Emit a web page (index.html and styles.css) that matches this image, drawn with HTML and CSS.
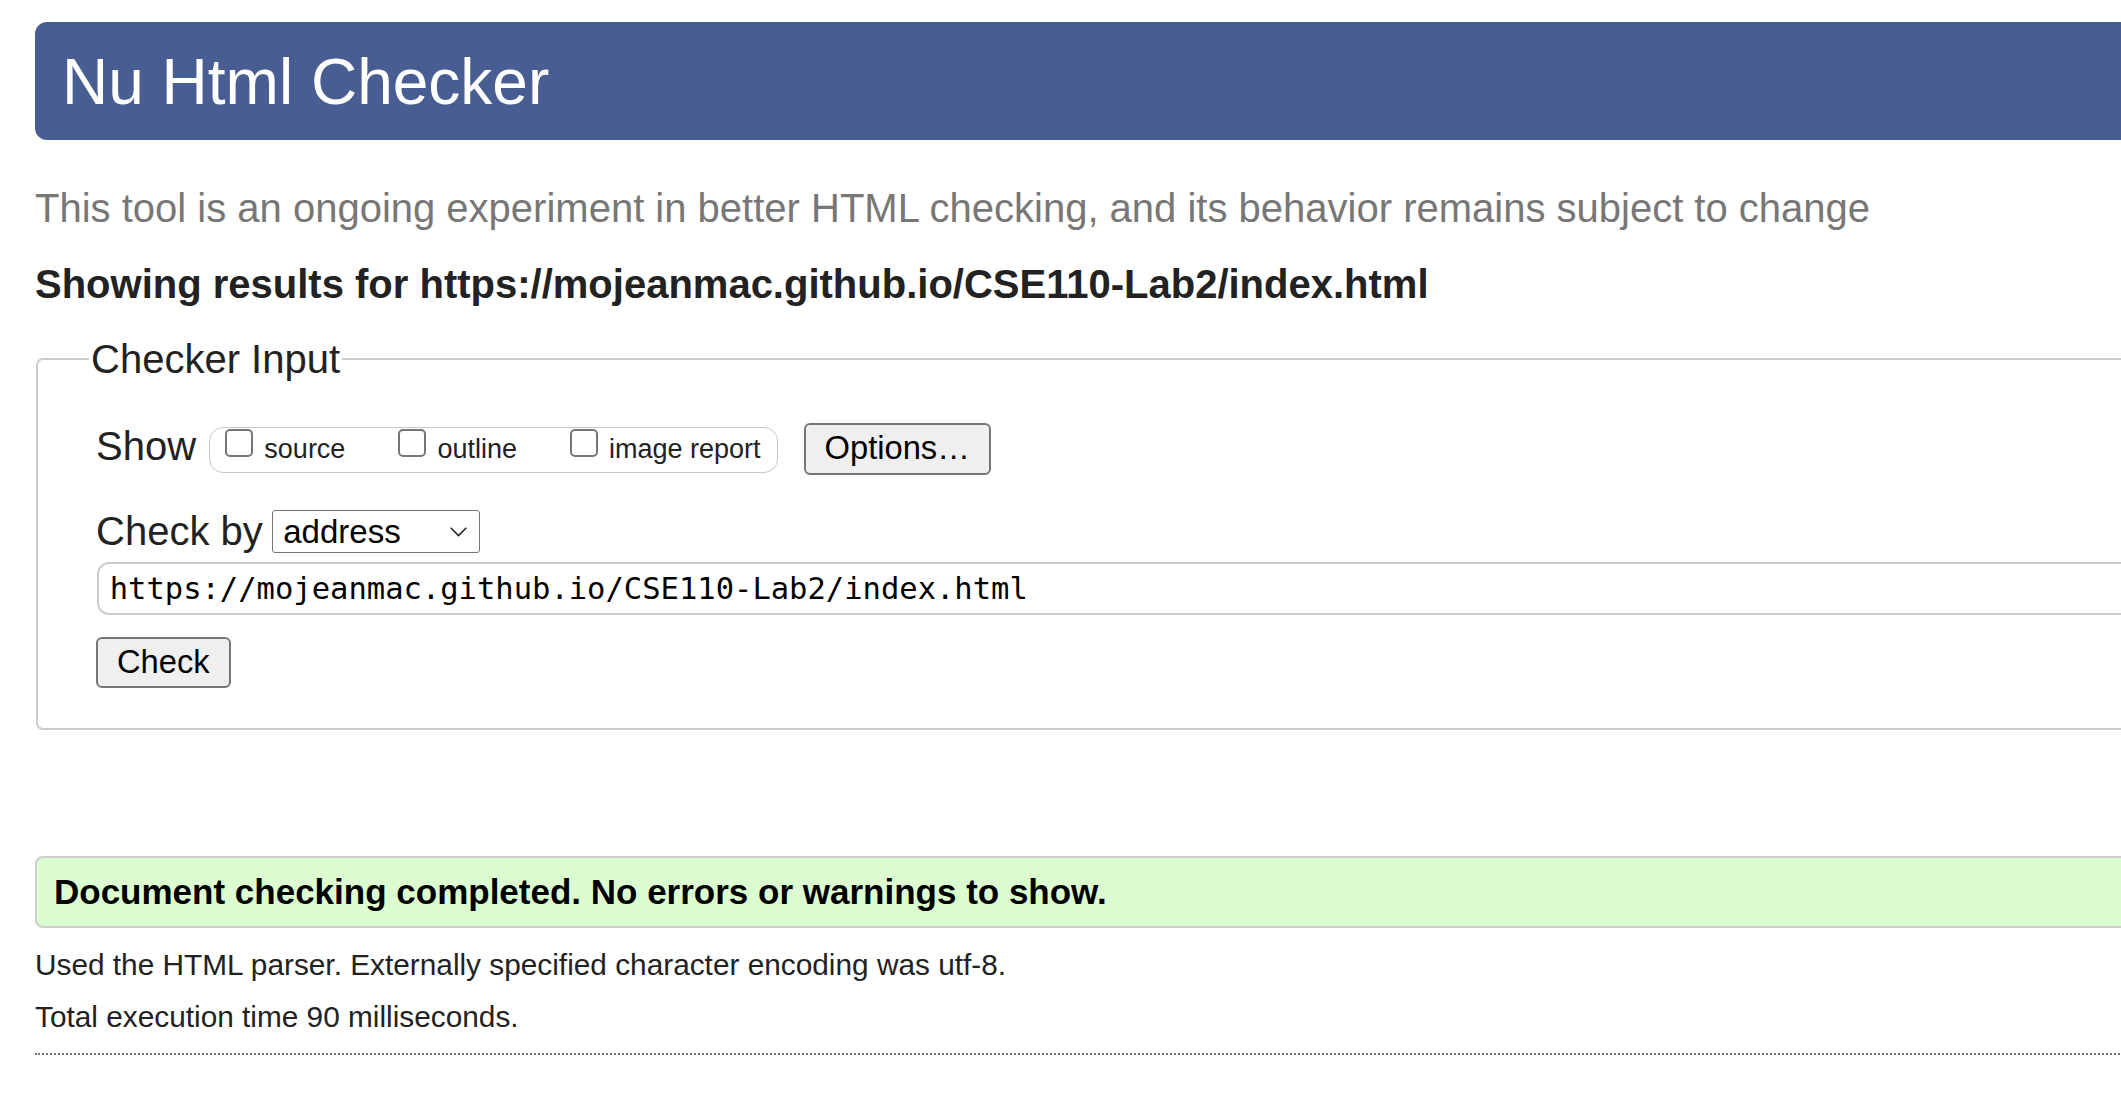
FILE: index.html
```html
<!DOCTYPE html>
<html lang="en">
<head>
<meta charset="utf-8">
<title>Nu Html Checker</title>
<link rel="stylesheet" href="styles.css">
</head>
<body>
<div class="page">
  <h1 class="banner">Nu Html Checker</h1>
  <p class="intro">This tool is an ongoing experiment in better HTML checking, and its behavior remains subject to change</p>
  <p class="showing">Showing results for https://mojeanmac.github.io/CSE110-Lab2/index.html</p>
  <form class="checker-form">
    <fieldset class="checker">
      <legend class="legend">Checker Input</legend>
      <div class="row row-show">
        <span class="lbl">Show</span>
        <span class="group">
          <label class="opt"><input type="checkbox" class="cb"><span class="opt-text">source</span></label>
          <label class="opt"><input type="checkbox" class="cb"><span class="opt-text">outline</span></label>
          <label class="opt"><input type="checkbox" class="cb"><span class="opt-text">image report</span></label>
        </span>
        <button type="button" class="btn btn-options">Options…</button>
      </div>
      <div class="row row-by">
        <label class="lbl">Check by</label>
        <span class="select-wrap">
          <select class="select"><option>address</option></select>
          <svg class="chev" width="17" height="10" viewBox="0 0 17 10"><polyline points="0.7,0.7 8.5,8.6 16.3,0.7" fill="none" stroke="#222" stroke-width="1.5"/></svg>
        </span>
      </div>
      <div class="row row-url">
        <input type="url" class="url" value="https://mojeanmac.github.io/CSE110-Lab2/index.html">
      </div>
      <div class="row row-btn">
        <button type="button" class="btn btn-check">Check</button>
      </div>
    </fieldset>
  </form>
  <p class="success">Document checking completed. No errors or warnings to show.</p>
  <p class="meta meta-first">Used the HTML parser. Externally specified character encoding was utf-8.</p>
  <p class="meta meta-second">Total execution time 90 milliseconds.</p>
  <hr class="dots">
</div>
</body>
</html>
```

FILE: styles.css
```css
html, body {
  margin: 0;
  padding: 0;
  overflow: hidden;
  background: #ffffff;
}

body {
  font-family: "Liberation Sans", Arial, sans-serif;
  color: #222222;
}

.page {
  width: 2400px;
  padding: 22px 0 0 35px;
}

.banner {
  margin: 0;
  height: 118px;
  box-sizing: border-box;
  background: #485e93;
  color: #ffffff;
  font-weight: normal;
  font-size: 64px;
  line-height: 72px;
  padding: 24px 0 0 27px;
  border-radius: 12px 0 0 12px;
}

.intro {
  margin: 45px 0 0;
  font-size: 40px;
  line-height: 46px;
  color: #777777;
}

.showing {
  margin: 30px 0 0;
  font-size: 40px;
  line-height: 46px;
  font-weight: bold;
  color: #222222;
}

.checker-form {
  margin: 29px 0 0;
}

.checker {
  margin: 0 0 0 1px;
  border: 2px solid #cccccc;
  border-radius: 7px;
  padding: 0 0 40px 58px;
  min-width: 0;
}

.legend {
  font-size: 40px;
  line-height: 46px;
  padding: 0 2px;
  margin-left: -7px;
  color: #222222;
}

.row {
  display: flex;
  align-items: flex-start;
}

.row-show {
  margin-top: 41px;
}

.lbl {
  font-size: 40px;
  line-height: 46px;
  color: #222222;
}

.group {
  display: flex;
  align-items: flex-start;
  box-sizing: border-box;
  height: 46px;
  border: 1px solid #c8c8c8;
  border-radius: 14px;
  padding: 1px 16px 0 15.6px;
  margin: 3.7px 0 0 12.7px;
}

.opt {
  display: flex;
  align-items: flex-start;
}

.opt + .opt {
  margin-left: 53px;
}

.cb {
  -webkit-appearance: none;
  appearance: none;
  width: 28px;
  height: 28px;
  margin: 0 11px 0 0;
  box-sizing: border-box;
  border: 2px solid #767676;
  border-radius: 5px;
  background: #ffffff;
}

.opt-text {
  font-size: 27px;
  line-height: 31px;
  margin-top: 5.5px;
  color: #222222;
}

.btn {
  font-family: "Liberation Sans", Arial, sans-serif;
  font-size: 32.7px;
  line-height: 37.6px;
  box-sizing: border-box;
  border: 2px solid #767676;
  border-radius: 6px;
  background: #efefef;
  color: #000000;
  margin: 0;
}

.btn-options {
  height: 52px;
  padding: 4px 19px 6px;
  margin-left: 26px;
}

.row-by {
  margin-top: 33px;
}

.select-wrap {
  position: relative;
  margin: 2px 0 0 9.5px;
}

.select {
  -webkit-appearance: none;
  appearance: none;
  display: block;
  font-family: "Liberation Sans", Arial, sans-serif;
  font-size: 33px;
  height: 43px;
  width: 208px;
  box-sizing: border-box;
  border: 1px solid #767676;
  border-radius: 3px;
  padding: 0 0 0 10px;
  background: #ffffff;
  color: #000000;
}

.chev {
  position: absolute;
  right: 13px;
  top: 17px;
}

.row-url {
  margin-top: 8px;
}

.url {
  display: block;
  width: 2200px;
  height: 53px;
  box-sizing: border-box;
  border: 2px solid #cccccc;
  border-radius: 12px;
  padding: 0 11px;
  margin: 0 0 0 0.7px;
  font-family: "DejaVu Sans Mono", "Liberation Mono", monospace;
  font-size: 30.5px;
  color: #000000;
  background: #ffffff;
}

.row-btn {
  margin-top: 22px;
}

.btn-check {
  height: 51px;
  padding: 4px 19px 5px;
  margin-left: 0;
}

.success {
  margin: 126px 0 0;
  border: 2px solid #cccccc;
  border-radius: 8px;
  background: #dcfdd0;
  padding: 14px 17px;
  font-size: 35px;
  line-height: 39.7px;
  font-weight: bold;
  color: #000000;
}

.meta {
  margin: 0;
  font-size: 29.8px;
  line-height: 34px;
  color: #222222;
}

.meta-first {
  margin-top: 20.7px;
}

.meta-second {
  margin-top: 17.7px;
}

.dots {
  margin: 19.3px 0 0;
  height: 0;
  border: 0;
  border-top: 2px dotted #777777;
}
```
